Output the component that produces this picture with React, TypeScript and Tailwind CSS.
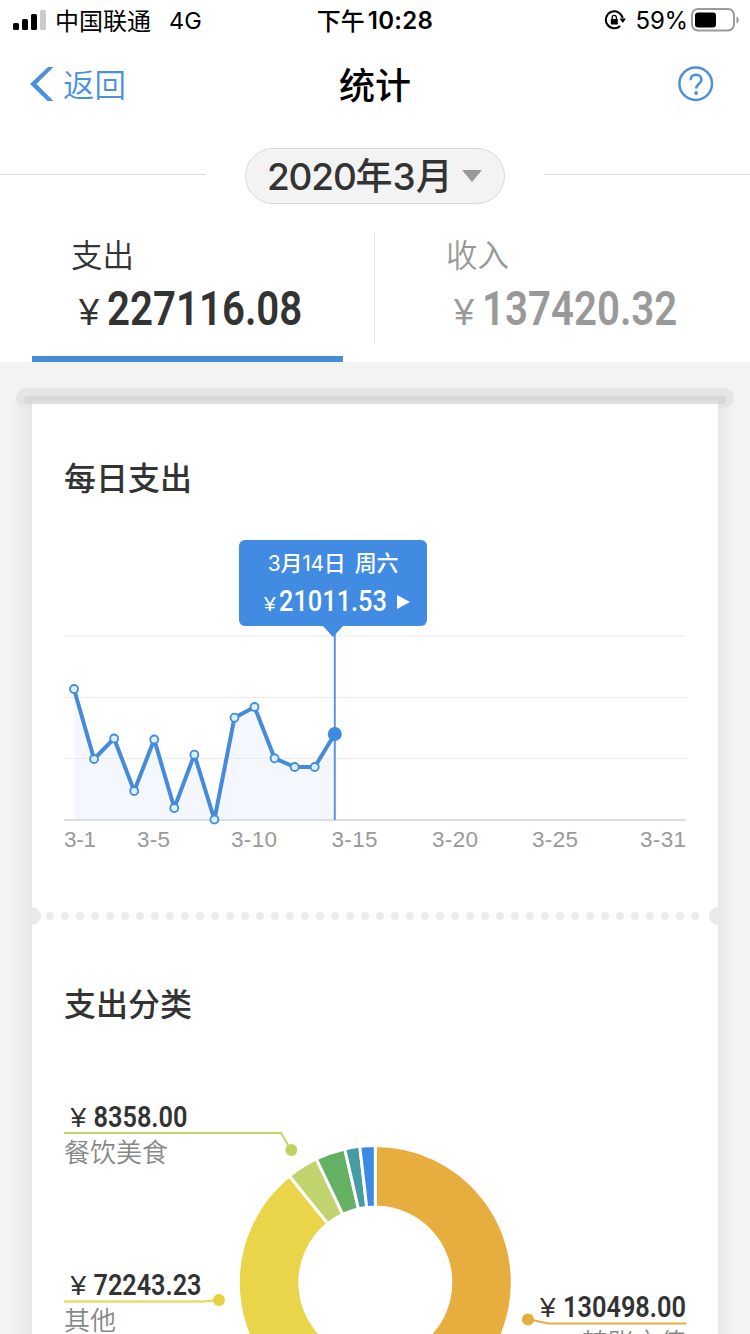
const dailyPoints = [
  { day: 1, y: 59 },
  { day: 2, y: 129 },
  { day: 3, y: 108.5 },
  { day: 4, y: 161 },
  { day: 5, y: 109.5 },
  { day: 6, y: 178 },
  { day: 7, y: 124.7 },
  { day: 8, y: 189.5 },
  { day: 9, y: 87.7 },
  { day: 10, y: 77 },
  { day: 11, y: 128.3 },
  { day: 12, y: 137 },
  { day: 13, y: 137 },
  { day: 14, y: 104 },
];

const axisLabels = [
  { text: '3-1', x: 0, width: 32 },
  { text: '3-5', x: 73, width: 33 },
  { text: '3-10', x: 167, width: 46 },
  { text: '3-15', x: 267.5, width: 46 },
  { text: '3-20', x: 368, width: 46 },
  { text: '3-25', x: 468, width: 46 },
  { text: '3-31', x: 576, width: 46 },
];

const slices = [
  { color: '#e7ad3f', from: 0, to: 206.9 },
  { color: '#ead54a', from: 206.9, to: 321.1 },
  { color: '#c0d36d', from: 321.1, to: 334.5 },
  { color: '#65b163', from: 334.5, to: 347.1 },
  { color: '#469ca0', from: 347.1, to: 353.5 },
  { color: '#3d89e5', from: 353.5, to: 360 },
];

const DOTS = Array.from({ length: 44 }, (_, i) => i);

const dayX = (day: number) => 10 + (day - 1) * 20.06;

function slicePath(from: number, to: number) {
  const cx = 311.3;
  const cy = 192.5;
  const outer = 137;
  const inner = 75.5;
  const at = (deg: number, r: number) => {
    const a = ((deg - 90) * Math.PI) / 180;
    return `${cx + r * Math.cos(a)} ${cy + r * Math.sin(a)}`;
  };
  const large = to - from > 180 ? 1 : 0;
  return `M${at(from, outer)} A${outer} ${outer} 0 ${large} 1 ${at(to, outer)} L${at(to, inner)} A${inner} ${inner} 0 ${large} 0 ${at(from, inner)} Z`;
}

function StatusBar() {
  return (
    <div className="grid h-10 grid-cols-3 items-center text-black">
      <div className="flex items-center pl-[13px]">
        <svg width="33" height="22" viewBox="0 0 33 22">
          <rect x="0" y="14" width="6" height="7" rx="1.5" />
          <rect x="9" y="10" width="6" height="11" rx="1.5" />
          <rect x="18" y="5" width="6" height="16" rx="1.5" />
          <rect x="27" y="1" width="6" height="20" rx="1.5" fill="#cbcbcb" />
        </svg>
        <span className="ml-[9px] text-[24px] leading-[38px]">中国联通</span>
        <span className="ml-[18px] pt-[2px] font-[Inter] text-[23.5px] leading-[38px]">4G</span>
      </div>
      <div className="flex items-center justify-center text-[24px] leading-[38px] font-medium">
        下午<span className="ml-[3px] pt-[2px] font-[Inter] text-[24px] font-semibold tracking-[0.3px]">10:28</span>
      </div>
      <div className="flex items-center justify-end pr-[10px]">
        <svg width="22" height="22" viewBox="0 0 22 22" fill="none" stroke="#000" strokeWidth="2">
          <path d="M16.2 17A8.500 8.500 0 1 1 18.700 9" />
          <path d="M15.500 9.500h6.500l-3.200 4.500z" fill="#000" stroke="none" />
          <rect x="6.8" y="10" width="7" height="5.500" rx=".5" fill="#000" stroke="none" />
          <path d="M8.200 10.500V8.500a2.100 2.100 0 0 1 4.200 0v2" strokeWidth="1.3" />
        </svg>
        <span className="ml-[10px] pt-[2px] font-[Inter] text-[24px] leading-[38px] tracking-[-0.2px]">59%</span>
        <svg className="ml-[3px]" width="49" height="24" viewBox="0 0 49 24">
          <rect x="1" y="1" width="42" height="21.5" rx="6" fill="none" stroke="#9b9b9b" strokeWidth="2" />
          <rect x="4" y="4.5" width="21" height="15" rx="3" />
          <path d="M45.500 8.500c3 1 3 6 0 7z" fill="#9b9b9b" />
        </svg>
      </div>
    </div>
  );
}

function NavBar() {
  return (
    <div className="grid h-[88px] grid-cols-3 items-center">
      <div className="flex items-center pl-[30px] text-[#4a90dc]">
        <svg width="24" height="36" viewBox="0 0 24 36" fill="currentColor">
          <path d="M0 18L18 1h5.500L6.500 18l17 17H17.500z" />
        </svg>
        <span className="ml-[9px] pb-[3px] text-[31.5px] leading-10 font-[350]">返回</span>
      </div>
      <h1 className="pb-[3px] text-center text-[36px] leading-10 font-medium text-black">统计</h1>
      <div className="flex justify-end pr-[36px]">
        <svg width="36" height="36" viewBox="0 0 36 36" fill="none" stroke="#4a90dc" strokeWidth="2.500">
          <circle cx="17.700" cy="17.700" r="16.300" />
          <path d="M12.500 14.200c0-3.400 2.300-5.500 5.500-5.500s5.500 2.100 5.500 5c0 3.900-5.300 4.300-5.300 8.700" />
          <circle cx="18.100" cy="27" r="1.900" fill="#4a90dc" stroke="none" />
        </svg>
      </div>
    </div>
  );
}

function MonthPicker() {
  return (
    <div className="mt-5 flex h-14 items-center justify-between">
      <div className="h-px w-[206px] -translate-y-[2px] bg-[#dedede]" />
      <button className="flex h-14 w-[260px] items-center rounded-full border border-[#d9d9d9] bg-[#f3f3f3] pl-[21px] text-[#333]">
        <span className="pb-[2px] text-[37px] leading-[52px] font-medium whitespace-nowrap">
          <span className="font-[Inter] text-[37px] tracking-[-1.2px]">2020</span>年
          <span className="font-[Inter] text-[37px]">3</span>月
        </span>
        <svg className="ml-[9px]" width="20" height="12" viewBox="0 0 20 12">
          <path d="M0 0h20L10 12z" fill="#999" />
        </svg>
      </button>
      <div className="h-px w-[206px] -translate-y-[2px] bg-[#dedede]" />
    </div>
  );
}

function SummaryTab({ label, amount, active }: { label: string; amount: string; active?: boolean }) {
  return (
    <div className={`flex h-[130px] flex-1 flex-col pl-[71px] ${active ? 'text-[#333]' : 'text-[#999]'}`}>
      <span className="text-[31.500px] leading-[42px] font-[350]">{label}</span>
      <div className="flex items-baseline pt-1 pl-[8px] leading-[62px]">
        <span className="font-['Liberation_Sans'] text-[36px]">¥</span>
        <span className="ml-[8px] origin-left scale-x-[.838] font-[Roboto] text-[48px] font-semibold">{amount}</span>
      </div>
    </div>
  );
}

function DailyChart() {
  const line = dailyPoints.map((p) => `${dayX(p.day)},${p.y}`).join(' ');
  const last = dailyPoints[dailyPoints.length - 1];

  return (
    <div className="relative mt-[130px] h-[230px]">
      <svg className="overflow-visible" width="622" height="230" viewBox="0 0 622 230">
        <polygon points={`10,190 ${line} ${dayX(last.day)},190`} fill="#f4f7fd" />
        <path d="M0 6H622M0 67.500H623M0 128.500H623" stroke="#ebebeb" strokeWidth="1" />
        <path d="M0 190H622" stroke="#dcdee0" strokeWidth="2" />
        <path d="M270.800 0V190" stroke="#5c96db" strokeWidth="2" />
        <polyline points={line} fill="none" stroke="#448bdb" strokeWidth="4" strokeLinejoin="round" />
        {dailyPoints.slice(0, -1).map((p) => (
          <circle key={p.day} cx={dayX(p.day)} cy={p.y} r="4" fill="#d9f0fd" stroke="#448bdb" strokeWidth="1.800" />
        ))}
        <circle cx={dayX(last.day)} cy={last.y} r="7" fill="#3f8ae2" />
        {axisLabels.map((l) => (
          <text key={l.text} x={l.x} y="217" textLength={l.width} className="font-['Liberation_Sans'] text-[22.500px]" fill="#999">
            {l.text}
          </text>
        ))}
      </svg>
      <div className="absolute top-[-90px] left-[175px] h-[86px] w-[188px] rounded-md bg-[#418ce2] text-white">
        <div className="pt-[4px] text-center text-[22px] leading-[34px] font-medium tracking-[-0.3px] whitespace-nowrap">
          <span className="font-[Inter] text-[21px] font-normal">3</span>月
          <span className="font-[Inter] text-[21px] font-normal">14</span>日&nbsp; 周六
        </div>
        <div className="flex items-baseline pl-[25px] leading-[40px]">
          <span className="font-['Liberation_Sans'] text-[21px]">¥</span>
          <span className="ml-[3px] w-[109px] origin-left scale-x-[.845] font-[Roboto] text-[30px] font-medium">21011.53</span>
          <svg className="ml-[9px]" width="13" height="16" viewBox="0 0 13 16">
            <path d="M0 0l13 7-13 7z" fill="#fff" />
          </svg>
        </div>
        <svg className="absolute top-[86px] left-[84px]" width="20" height="11" viewBox="0 0 20 11">
          <path d="M0 0h20L10 11z" fill="#418ce2" />
        </svg>
      </div>
    </div>
  );
}

function Amount({ x, y, value, width }: { x: number; y: number; value: string; width: number }) {
  return (
    <g fill="#333">
      <text x={x} y={y} className="font-['Liberation_Sans'] text-[28px]">¥</text>
      <text x={x + 23} y={y} textLength={width} lengthAdjust="spacingAndGlyphs" className="font-[Roboto] text-[29px] font-semibold">
        {value}
      </text>
    </g>
  );
}

function CategoryChart() {
  return (
    <svg className="mt-[64px] overflow-visible" width="622" height="360" viewBox="0 0 622 360">
      {slices.map((s) => (
        <path key={s.color} d={slicePath(s.from, s.to)} fill={s.color} stroke="#fff" strokeWidth="3" />
      ))}

      <path d="M0 43H217L227 60" fill="none" stroke="#c0d36d" strokeWidth="2" />
      <circle cx="227.300" cy="60" r="6" fill="#bfd25f" />
      <Amount x={6.500} y={37} value="8358.00" width={94} />
      <text x="0" y="71.500" className="text-[26px] font-[350]" fill="#888">餐饮美食</text>

      <path d="M0 211.500H139L155 210" fill="none" stroke="#ead54a" strokeWidth="2" />
      <circle cx="155" cy="210" r="6" fill="#e8d040" />
      <Amount x={6.500} y={205} value="72243.23" width={108} />
      <text x="0" y="239.500" className="text-[26px] font-[350]" fill="#888">其他</text>

      <path d="M622 233.500H484L464 229" fill="none" stroke="#e7ad3f" strokeWidth="2" />
      <circle cx="464" cy="229.500" r="6" fill="#e7ad3f" />
      <Amount x={476} y={227} value="130498.00" width={123} />
      <text x="518" y="261.500" className="text-[26px] font-[350]" fill="#888">转账充值</text>
    </svg>
  );
}

function Perforation() {
  return (
    <div className="-mx-8 mt-[47px] flex h-[18px] items-center justify-between">
      <div className="h-[18px] w-[9px] rounded-r-full bg-[#e9e9e9]" />
      <div className="mr-[6px] flex h-px items-center gap-[7px] bg-[#f6f6f6]">
        {DOTS.map((i) => (
          <span key={i} className="size-[8px] shrink-0 rounded-full bg-[#ebebeb]" />
        ))}
      </div>
      <div className="h-[18px] w-[9px] rounded-l-full bg-[#e9e9e9]" />
    </div>
  );
}

export default function App() {
  return (
    <div className="h-[1334px] w-[750px] overflow-hidden bg-[#f3f3f3] font-['Noto_Sans_CJK_SC',sans-serif]">
      <header className="h-[362px] bg-white">
        <StatusBar />
        <NavBar />
        <MonthPicker />
        <div className="relative mt-[28px] flex">
          <SummaryTab label="支出" amount="227116.08" active />
          <div className="-ml-px h-[112px] w-px bg-[#e8e8e8]" />
          <SummaryTab label="收入" amount="137420.32" />
          <div className="absolute bottom-0 left-8 h-[6px] w-[311px] bg-[#458bd8]" />
        </div>
      </header>

      <main className="pt-[26px]">
        <div className="relative z-10 mx-4 h-5 rounded-full bg-[#e5e5e5] px-2 pt-2">
          <div className="h-2 rounded-full bg-[#d8d8d8]" />
        </div>
        <div className="-mt-2 flex h-[1000px]">
          <div className="w-8 bg-linear-to-r from-[#f3f3f3] from-30% to-[#e8e8e8]" />
          <section className="relative z-20 w-[686px] border-t-4 border-[#dfdfdf] bg-white px-8">
            <h2 className="pt-[48px] text-[32px] leading-[48px] font-medium text-[#333]">每日支出</h2>
            <DailyChart />
            <Perforation />
            <h2 className="mt-[53px] text-[32px] leading-[48px] font-medium text-[#333]">支出分类</h2>
            <CategoryChart />
          </section>
          <div className="w-8 bg-linear-to-r from-[#e8e8e8] to-[#f3f3f3] to-50%" />
        </div>
      </main>
    </div>
  );
}
